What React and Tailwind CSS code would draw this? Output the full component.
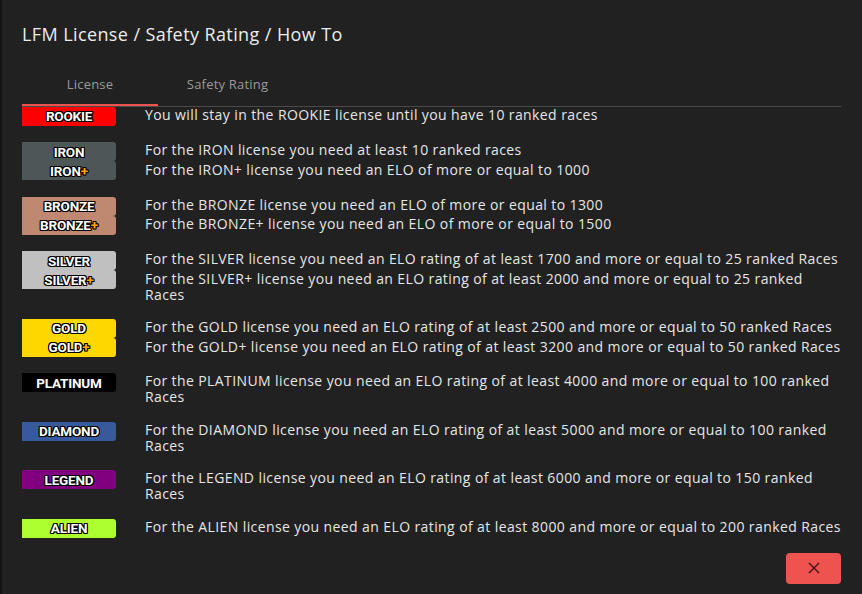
import React from "react";

const outline =
  "[text-shadow:-1px_-1px_0_#000,1px_-1px_0_#000,-1px_1px_0_#000,1px_1px_0_#000,0_1px_0_#000,0_-1px_0_#000,1px_0_0_#000,-1px_0_0_#000]";

function Badge({ label, plus, bg }) {
  return (
    <div
      className={`w-[94px] h-[19px] rounded-r-[3px] flex items-center justify-center text-white font-bold text-[13.5px] tracking-[-0.2px] ${outline} ${bg}`}
      style={{ fontFamily: "Roboto, sans-serif" }}
    >
      <span>{label}</span>
      {plus && <span className="text-[#ffa500]">+</span>}
    </div>
  );
}

const rows = [
  {
    name: "ROOKIE",
    bg: "bg-[#ff0000]",
    double: false,
    texts: ["You will stay in the ROOKIE license until you have 10 ranked races"],
  },
  {
    name: "IRON",
    bg: "bg-[#4e5758]",
    double: true,
    texts: [
      "For the IRON license you need at least 10 ranked races",
      "For the IRON+ license you need an ELO of more or equal to 1000",
    ],
  },
  {
    name: "BRONZE",
    bg: "bg-[#bf8870]",
    double: true,
    texts: [
      "For the BRONZE license you need an ELO of more or equal to 1300",
      "For the BRONZE+ license you need an ELO of more or equal to 1500",
    ],
  },
  {
    name: "SILVER",
    bg: "bg-[#c0c0c0]",
    double: true,
    texts: [
      "For the SILVER license you need an ELO rating of at least 1700 and more or equal to 25 ranked Races",
      "For the SILVER+ license you need an ELO rating of at least 2000 and more or equal to 25 ranked Races",
    ],
  },
  {
    name: "GOLD",
    bg: "bg-[#ffd700]",
    double: true,
    texts: [
      "For the GOLD license you need an ELO rating of at least 2500 and more or equal to 50 ranked Races",
      "For the GOLD+ license you need an ELO rating of at least 3200 and more or equal to 50 ranked Races",
    ],
  },
  {
    name: "PLATINUM",
    bg: "bg-[#000000]",
    double: false,
    texts: [
      "For the PLATINUM license you need an ELO rating of at least 4000 and more or equal to 100 ranked Races",
    ],
  },
  {
    name: "DIAMOND",
    bg: "bg-[#365a9c]",
    double: false,
    texts: [
      "For the DIAMOND license you need an ELO rating of at least 5000 and more or equal to 100 ranked Races",
    ],
  },
  {
    name: "LEGEND",
    bg: "bg-[#800080]",
    double: false,
    texts: [
      "For the LEGEND license you need an ELO rating of at least 6000 and more or equal to 150 ranked Races",
    ],
  },
  {
    name: "ALIEN",
    bg: "bg-[#adff2f]",
    double: false,
    texts: [
      "For the ALIEN license you need an ELO rating of at least 8000 and more or equal to 200 ranked Races",
    ],
  },
];

export default function App() {
  return (
    <div
      className="w-[862px] h-[594px] bg-[#0f0f0f] flex overflow-hidden"
      style={{ fontFamily: '"Open Sans", sans-serif' }}
    >
      <div className="w-[2px] shrink-0 bg-[#141414]" />
      <div className="flex-1 min-w-0 bg-[#212121] pt-[22px] pl-[20px] pr-[21px] flex flex-col">
        <h1 className="h-[24px] leading-[24px] text-[18px] tracking-[0.4px] font-medium text-[#ececec]">
          LFM License / Safety Rating / How To
        </h1>
        <div className="mt-[22px] border-b border-[#4a4a4a] flex">
          <div className="w-[136px] h-[38px] border-b-2 border-[#ef5350] flex items-center justify-center text-[13px] tracking-[0.2px] text-[#9a9a9a] pb-[2px]">
            License
          </div>
          <div className="w-[139px] h-[38px] flex items-center justify-center text-[13px] tracking-[0.2px] text-[#9a9a9a] pb-[4px]">
            Safety Rating
          </div>
        </div>
        <div className="flex flex-col gap-[16.4px]">
          {rows.map((r) => (
            <div key={r.name} className="flex items-start">
              <div className="flex flex-col shrink-0">
                <Badge label={r.name} bg={r.bg} />
                {r.double && <Badge label={r.name} bg={r.bg} plus />}
              </div>
              <div className="ml-[29px] w-[697px] shrink-0 flex flex-col gap-[3.5px] text-[14px] tracking-[0.4px] leading-[16px] text-[#e6e6e6]">
                {r.texts.map((t) => (
                  <p key={t}>{t}</p>
                ))}
              </div>
            </div>
          ))}
        </div>
        <div className="mt-[15px] flex justify-end">
          <button className="w-[55px] h-[31px] rounded-[4px] bg-[#ef5350] flex items-center justify-center">
            <svg width="14" height="14" viewBox="0 0 14 14" fill="none">
              <path d="M2 2L12 12M12 2L2 12" stroke="#3a1414" strokeWidth="1.4" />
            </svg>
          </button>
        </div>
      </div>
    </div>
  );
}
